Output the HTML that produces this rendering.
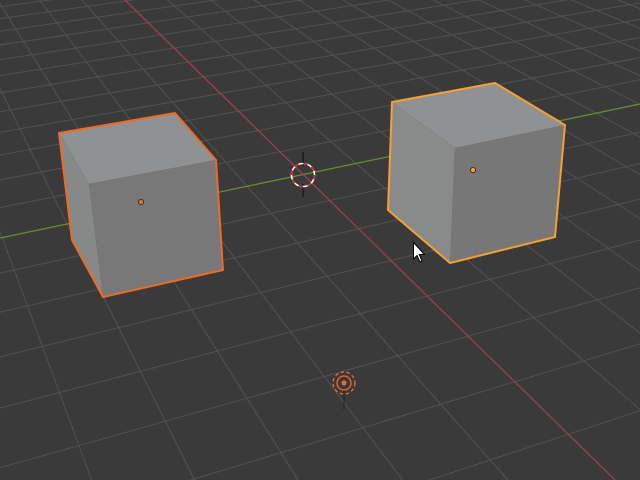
<!DOCTYPE html>
<html><head><meta charset="utf-8"><style>
html,body{margin:0;padding:0;background:#3a3a3a;overflow:hidden;width:640px;height:480px}
svg{display:block}
</style></head><body>
<svg id="s" width="640" height="480" viewBox="0 0 640 480" xmlns="http://www.w3.org/2000/svg">
<rect width="640" height="480" fill="#3a3a3a"/>
<g id="grid" stroke="#525252" stroke-width="1" fill="none"></g>
<line x1="0" y1="238" x2="640" y2="104" stroke="#6b8d2e" stroke-width="1.3"/>
<line x1="125" y1="0" x2="615" y2="480" stroke="#9a4050" stroke-width="1.3"/>
<polygon points="59,133 175,113 216,160 89,184" fill="#909192"/>
<polygon points="89,184 216,160 223,270 103,297" fill="#777877"/>
<polygon points="59,133 89,184 103,297 72,240" fill="#878888"/>
<polygon points="59,133 175,113 216,160 223,270 103,297 72,240" fill="none" stroke="#f06a24" stroke-width="2" stroke-linejoin="round"/>
<circle cx="141" cy="202" r="2.6" fill="#f07020" stroke="#222" stroke-width="0.8"/>
<polygon points="392,102 495,83 565,125 455,148" fill="#909192"/>
<polygon points="455,148 565,125 555,237 450,263" fill="#767776"/>
<polygon points="392,102 455,148 450,263 388,210" fill="#898a8a"/>
<polygon points="392,102 495,83 565,125 555,237 450,263 388,210" fill="none" stroke="#f5a030" stroke-width="2" stroke-linejoin="round"/>
<circle cx="473" cy="170" r="2.6" fill="#f5a030" stroke="#222" stroke-width="0.8"/>
<line x1="303" y1="152" x2="303" y2="166" stroke="#111" stroke-width="1.2"/>
<line x1="303" y1="184" x2="303" y2="197" stroke="#111" stroke-width="1.2"/>
<circle cx="303" cy="175" r="11.5" fill="none" stroke="#ffffff" stroke-width="1.6"/>
<circle cx="303" cy="175" r="11.5" fill="none" stroke="#e02020" stroke-width="1.6" stroke-dasharray="4.5 4.5"/>
<line x1="344" y1="390" x2="344" y2="410" stroke="#222" stroke-width="1"/>
<circle cx="344" cy="383" r="7" fill="none" stroke="#f06a24" stroke-width="1.3"/>
<circle cx="344" cy="383" r="11" fill="none" stroke="#f06a24" stroke-width="1.3" stroke-dasharray="3.5 2.5"/>
<circle cx="344" cy="383" r="2.5" fill="#f06a24"/>
<path d="M413.5,242.5 L413.5,259 L417,255.5 L420,262 L422,261 L419.3,254.5 L424.5,254.5 Z" fill="#fff" stroke="#000" stroke-width="1"/>
</svg>
<script>
(function(){
var g=document.getElementById('grid');
var O=[303,175],B=[-204,-322],A=[3200,-432];
var al=0.049,be=0.0188;
function pt(t,V){var f=t/(1+t);return [O[0]+f*(V[0]-O[0]),O[1]+f*(V[1]-O[1])];}
function add(P,V){
  var dx=P[0]-V[0],dy=P[1]-V[1];
  var l=document.createElementNS('http://www.w3.org/2000/svg','line');
  l.setAttribute('x1',V[0]);l.setAttribute('y1',V[1]);l.setAttribute('x2',P[0]+dx*20);l.setAttribute('y2',P[1]+dy*20);
  g.appendChild(l);
}
for(var k=-60;k<=60;k++){ if(k==0)continue; var t=be*k; if(1+t<=0.05)continue; add(pt(t,A),B);}
for(var k=-19;k<=60;k++){ if(k==0)continue; var t=al*k; if(1+t<=0.05)continue; add(pt(t,B),A);}
})();
</script>
</body></html>
